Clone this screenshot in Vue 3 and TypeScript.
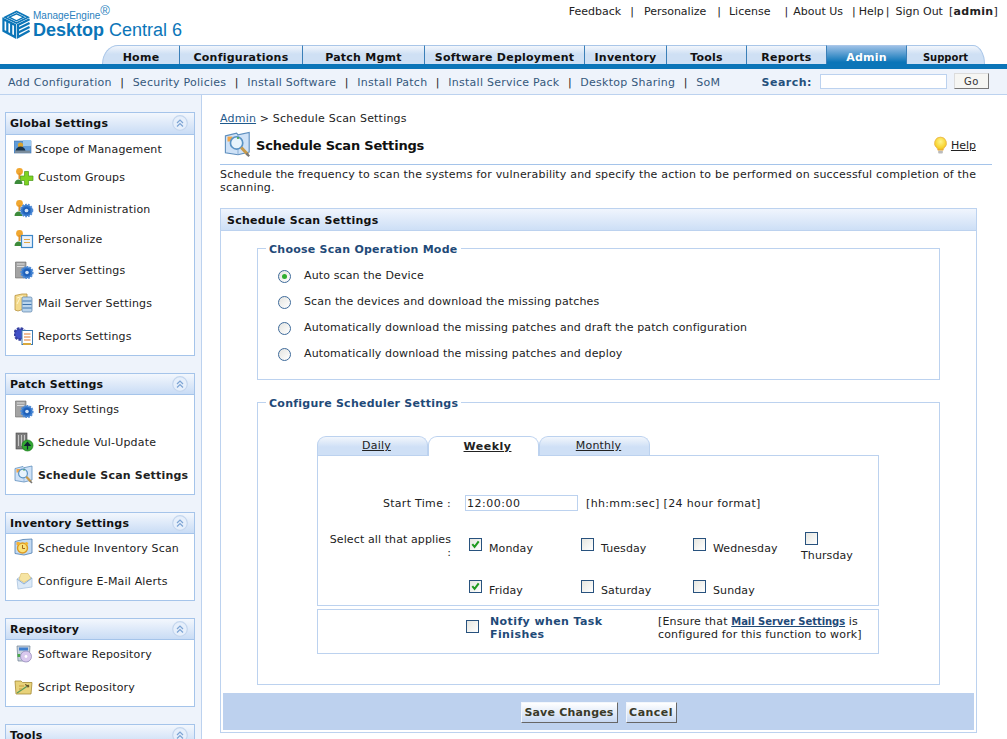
<template>
  <div class="page">
    <header class="top">
      <a class="logo">
        <svg class="logo-mark" viewBox="0 0 30 31" fill="none" stroke="#0b75b8" stroke-width="2.300">
          <path d="M3 9 15 3l12 6-12 6z" stroke-width="1.700" />
          <path d="M7.500 9 15 5.400 22.500 9 15 12.700z" stroke-width="1.500" />
          <path d="M1.500 11v12l12 6.500V17zM5.500 13.500V25M9.500 15.500V27" />
          <path d="M28.500 11 16.500 17v12.500l12-6.500M28.500 15l-12 6M28.500 19l-12 6" />
        </svg>
        <span class="logo-text">
          <span class="brand">ManageEngine<sup>®</sup></span>
          <span class="product"><b>Desktop</b> Central 6</span>
        </span>
      </a>
      <nav class="toplinks">
        <a>Feedback</a><i class="s1">|</i>
        <a>Personalize</a><i class="s2">|</i>
        <a>License</a><i class="s3">|</i>
        <a>About Us</a><i class="s4">|</i>
        <a>Help</a><i class="s5">|</i>
        <a>Sign Out</a>
        <span class="who">[<b>admin</b>]</span>
      </nav>
    </header>

    <div class="tabs-row">
      <div class="tabs">
        <a v-for="t in mainTabs" :key="t" :class="['tab', { on: t === 'Admin', small: t === 'Support' }]">{{ t }}</a>
      </div>
    </div>

    <div class="subnav">
      <nav class="sublinks">
        <template v-for="(l, i) in subLinks" :key="l">
          <i v-if="i">|</i><a>{{ l }}</a>
        </template>
      </nav>
      <label class="search-label">Search:</label>
      <input class="search-input" type="text" />
      <button class="go">Go</button>
    </div>

    <div class="layout">
      <aside class="side">
        <section v-for="p in panels" :key="p.title" class="panel">
          <h3 class="panel-head">
            {{ p.title }}
            <span class="collapse">
              <svg viewBox="0 0 16 16" fill="none" stroke="#7da4d4" stroke-width="1.200">
                <circle cx="8" cy="8" r="7.300" fill="#e6effb" stroke="#c4d6ee" />
                <path d="M5 8l3-3 3 3M5 11.500l3-3 3 3" />
              </svg>
            </span>
          </h3>
          <ul class="panel-body" :style="{ height: p.bodyH + 'px' }">
            <li
              v-for="it in p.items"
              :key="it.label"
              :class="{ current: it.current, tight: it.tight }"
              :style="{ marginTop: it.mt + 'px' }"
            >
              <svg class="ico" viewBox="0 0 20 20" v-html="icons[it.icon]"></svg>
              <span>{{ it.label }}</span>
            </li>
          </ul>
        </section>
      </aside>

      <main class="content">
        <div class="crumb"><a>Admin</a> &gt; Schedule Scan Settings</div>
        <div class="title-row">
          <svg class="title-ico" viewBox="0 0 20 20" v-html="icons.scan"></svg>
          <h1>Schedule Scan Settings</h1>
          <a class="help">
            <svg viewBox="0 0 16 20">
              <defs>
                <radialGradient id="bulb" cx="0.500" cy="0.350" r="0.700">
                  <stop offset="0" stop-color="#fff58a" />
                  <stop offset="0.700" stop-color="#f7d22c" />
                  <stop offset="1" stop-color="#e59a1c" />
                </radialGradient>
              </defs>
              <path d="M8 1a6.500 6.500 0 0 0-4 11.500c.8.800 1.200 1.500 1.200 2.500h5.600c0-1 .4-1.700 1.200-2.500A6.500 6.500 0 0 0 8 1z" fill="url(#bulb)" stroke="#e8b04a" stroke-width=".8" />
              <rect x="5.500" y="15.500" width="5" height="3" rx="1" fill="#bbb" />
            </svg>
            <span>Help</span>
          </a>
        </div>
        <p class="desc">Schedule the frequency to scan the systems for vulnerability and specify the action to be performed on successful completion of the scanning.</p>

        <section class="card">
          <h2 class="card-head">Schedule Scan Settings</h2>

          <fieldset class="group g-mode">
            <legend>Choose Scan Operation Mode</legend>
            <label v-for="(m, i) in modes" :key="m" class="radio-row">
              <span :class="['radio', { on: i === 0 }]"></span>{{ m }}
            </label>
          </fieldset>

          <fieldset class="group g-sched">
            <legend>Configure Scheduler Settings</legend>
            <div class="sched-inner">
              <div class="subtabs">
                <a class="subtab">Daily</a>
                <a class="subtab on">Weekly</a>
                <a class="subtab">Monthly</a>
              </div>
              <div class="weekly">
                <div class="lbl time-lbl">Start Time :</div>
                <div class="time-val">
                  <input class="time-input" type="text" value="12:00:00" />
                  <span>[hh:mm:sec] [24 hour format]</span>
                </div>
                <div class="lbl sel-lbl">Select all that applies<br />:</div>
                <div class="days">
                  <div v-for="d in days" :key="d.name" :class="['day', { stack: d.name === 'Thursday' }]">
                    <span class="check">
                      <svg v-if="d.on" viewBox="0 0 12 12" fill="none" stroke="#1f9a1f" stroke-width="2.200">
                        <path d="M2.500 5.500 5 8.500l4.500-6" />
                      </svg>
                    </span>
                    <span class="day-name">{{ d.name }}</span>
                  </div>
                </div>
              </div>
              <div class="notify">
                <span class="check notify-check"></span>
                <strong>Notify when Task Finishes</strong>
                <div class="ensure">[Ensure that <a>Mail Server Settings</a> is configured for this function to work]</div>
              </div>
            </div>
          </fieldset>

          <div class="actions">
            <button class="btn save">Save Changes</button>
            <button class="btn cancel">Cancel</button>
          </div>
        </section>
      </main>
    </div>
  </div>
</template>

<script setup lang="ts">
interface Item {
  label: string;
  icon: string;
  mt: number;
  current?: boolean;
  tight?: boolean;
}

const gear = (x: number, y: number, r: number) =>
  `<circle cx="${x}" cy="${y}" r="${r}" fill="#2f73c9" stroke="#4f8bd6" stroke-width="2" stroke-dasharray="1.800 1"/><circle cx="${x}" cy="${y}" r="${r * 0.62}" fill="#1f5fb8"/><circle cx="${x}" cy="${y}" r="${r * 0.32}" fill="#cfe3f8"/>`;
const person =
  '<circle cx="5.500" cy="4.500" r="3.400" fill="#f1a72f"/><rect x="4.500" y="6" width="2" height="6" fill="#e0922a"/><path d="M.5 17c0-3 2-4.500 4-4.500s4 1.500 4 4.500z" fill="#3d8b3a"/>';
const server =
  '<path d="M1.500 2h10.500v16H1.500z" fill="#a3a3a3" stroke="#6a6a6a" stroke-width=".6"/><path d="M3 4h7.500M3 6.500h7.500" stroke="#dcdcdc"/>';

const icons: Record<string, string> = {
  scope:
    '<rect x="0" y="2" width="17" height="12" fill="#5f9bd8" stroke="#3c6fa8" stroke-width=".6"/><rect x="9" y="1" width="8" height="6" fill="#9cc9ef"/><circle cx="6.500" cy="6" r="2.600" fill="#d8a32e"/><path d="M1.500 12c.5-3 2.500-4.500 5-4.500s4.500 1.500 5 4.500z" fill="#17324a"/><rect x="1" y="11.500" width="15" height="2.500" fill="#7a8c9c"/>',
  groups:
    person +
    '<path d="M10.500 4.500h4v4.500h4.500v4.500h-4.500v4.500h-4v-4.500H6.500V9h4z" fill="#7ed321" stroke="#4c9a1a" stroke-width=".7"/>',
  users: person + gear(12.500, 11.500, 5.800),
  personalize:
    person +
    '<rect x="7.500" y="6.500" width="11" height="12" fill="#eaf2fb" stroke="#3d87c8" stroke-width="1.200"/><path d="M10 10.500h6M10 13.500h6" stroke="#e0a84a"/>',
  server: server + gear(13, 12.500, 5.600),
  mail:
    '<path d="M1 2.500 8 1h5v14l-9 3-3-1z" fill="#f4da8c" stroke="#b8923c" stroke-width=".8"/><path d="M3 5l6-2M3 11l3-6" stroke="#fff6cf"/><rect x="8" y="4" width="10" height="15" rx="1.500" fill="#b9d4ec" stroke="#5a7fa8" stroke-width=".7"/><path d="M8.500 8h9M8.500 11.500h9M8.500 15h9" stroke="#3f74ac"/>',
  reports:
    '<circle cx="6" cy="8" r="5.500" fill="#4050c8" stroke="#3640a0" stroke-width="2.500" stroke-dasharray="2.500 1.200"/><rect x="8" y="4.500" width="10.500" height="14" fill="#fff" stroke="#3d7ab0" stroke-width="1"/><path d="M10 8h6.500M10 11h6.500M10 14h6.500" stroke="#e07a2c"/><rect x="9" y="17" width="8" height="2" fill="#d8a83c"/>',
  vul:
    '<rect x="2" y="1" width="11" height="16" fill="#7d7d7d" stroke="#444" stroke-width=".6"/><path d="M4.500 3v11M7.500 3v11M10.500 3v11" stroke="#c8c8c8"/><circle cx="13.500" cy="13.500" r="5.500" fill="#32a832" stroke="#1a7a1a" stroke-width=".7"/><path d="M13.500 17.500v-5M11 13.500l2.500-3 2.500 3z" stroke="#123" stroke-width="1.200" fill="#123"/>',
  scan:
    '<path d="M1 3.500 9 1.500l1 1.200L18 1v14l-8 2-9-1.500z" fill="#cfe2f7" stroke="#5f8fbe" stroke-width=".8"/><path d="M10 2.800V17" stroke="#7ea6cf" stroke-width=".6"/><rect x="2.500" y="4" width="3.500" height="3.500" fill="#f2a64a"/><circle cx="9" cy="8.500" r="4.400" fill="#e8f4fc" stroke="#5a93c4" stroke-width="1.200"/><circle cx="10" cy="5" r=".8" fill="#4aa84a"/><path d="m12.300 11.800 4.700 5" stroke="#c89a4a" stroke-width="2.200"/><path d="m16 16 2 2" stroke="#777" stroke-width="1.600"/>',
  inventory:
    '<path d="M1 3.500 9 1.500 18 1v14l-8 2-9-1.500z" fill="#c3daf2" stroke="#4d7cae" stroke-width=".8"/><rect x="2.500" y="4" width="3" height="3" fill="#f2a64a"/><circle cx="8.500" cy="10" r="5" fill="#fbe27a" stroke="#dd9a22" stroke-width="1.400"/><path d="M8.500 7v3.500h2.500" stroke="#a5681c" fill="none"/><circle cx="4.500" cy="5.500" r="1.600" fill="#f3b52e"/><circle cx="12.500" cy="5.500" r="1.600" fill="#f3b52e"/>',
  email:
    '<path d="M3 8 10 3l8 4v9l-14 2z" fill="#dbe9f7" stroke="#a9c3de" stroke-width=".8"/><path d="M7 2.500h7l3 5-7 4-5-3z" fill="#f6e4a2" stroke="#d8b860" stroke-width=".6"/><path d="M3 8l7 5 8-6" stroke="#8fb1d6" fill="none"/>',
  software:
    '<path d="M3 2h13l-1 15H4z" fill="#c8d3de" stroke="#6d7f92" stroke-width=".7"/><rect x="5" y="3.500" width="9" height="3" fill="#3f7fcf"/><rect x="3.500" y="10" width="3" height="3" fill="#4aa84a"/><circle cx="12" cy="12.500" r="5.500" fill="#d9c8ee" stroke="#8f86b8" stroke-width=".7"/><circle cx="12" cy="12.500" r="1.400" fill="#fff"/>',
  script:
    '<path d="M1 4h6l1.500 1.500H18L17 17H2z" fill="#e8d27a" stroke="#a58a35" stroke-width=".8"/><path d="M3 16 15 8" stroke="#5d9a5a" stroke-width="1.300"/><path d="M11 7.500l4 1.500-1 1.500" fill="#7c5a2c" stroke="#5b4020" stroke-width=".8"/><path d="M5 9h5M5 12h3" stroke="#c49a3a"/>',
};

const mainTabs = ["Home", "Configurations", "Patch Mgmt", "Software Deployment", "Inventory", "Tools", "Reports", "Admin", "Support"];
const subLinks = ["Add Configuration", "Security Policies", "Install Software", "Install Patch", "Install Service Pack", "Desktop Sharing", "SoM"];

const panels: { title: string; bodyH: number; items: Item[] }[] = [
  {
    title: "Global Settings",
    bodyH: 220,
    items: [
      { label: "Scope of Management", icon: "scope", mt: 4, tight: true },
      { label: "Custom Groups", icon: "groups", mt: 8 },
      { label: "User Administration", icon: "users", mt: 12 },
      { label: "Personalize", icon: "personalize", mt: 10 },
      { label: "Server Settings", icon: "server", mt: 11 },
      { label: "Mail Server Settings", icon: "mail", mt: 13 },
      { label: "Reports Settings", icon: "reports", mt: 13 },
    ],
  },
  {
    title: "Patch Settings",
    bodyH: 99,
    items: [
      { label: "Proxy Settings", icon: "server", mt: 4 },
      { label: "Schedule Vul-Update", icon: "vul", mt: 13 },
      { label: "Schedule Scan Settings", icon: "scan", mt: 13, current: true },
    ],
  },
  {
    title: "Inventory Settings",
    bodyH: 66,
    items: [
      { label: "Schedule Inventory Scan", icon: "inventory", mt: 4 },
      { label: "Configure E-Mail Alerts", icon: "email", mt: 13 },
    ],
  },
  {
    title: "Repository",
    bodyH: 66,
    items: [
      { label: "Software Repository", icon: "software", mt: 4 },
      { label: "Script Repository", icon: "script", mt: 13 },
    ],
  },
  { title: "Tools", bodyH: 40, items: [] },
];

const modes = [
  "Auto scan the Device",
  "Scan the devices and download the missing patches",
  "Automatically download the missing patches and draft the patch configuration",
  "Automatically download the missing patches and deploy",
];

const days = [
  { name: "Monday", on: true },
  { name: "Tuesday", on: false },
  { name: "Wednesday", on: false },
  { name: "Thursday", on: false },
  { name: "Friday", on: true },
  { name: "Saturday", on: false },
  { name: "Sunday", on: false },
];
</script>

<style>
html,
body {
  margin: 0;
  overflow: hidden;
  background: #fff;
}
</style>

<style scoped>
.page {
  width: 1007px;
  height: 739px;
  overflow: hidden;
  font: 11px/13px "DejaVu Sans", Verdana, sans-serif;
  color: #222;
  background: #fff;
}

/* header */
.top {
  display: flex;
  justify-content: space-between;
  height: 45px;
}
.logo {
  display: flex;
  gap: 2px;
  padding: 8px 0 0 2px;
  color: #0b75b8;
  font-family: "Liberation Sans", Arial, sans-serif;
}
.logo-mark {
  width: 29px;
  height: 31px;
}
.logo-text {
  display: flex;
  flex-direction: column;
}
.brand {
  font-size: 10px;
  line-height: 11px;
  margin-top: 2px;
  color: #2a7fbe;
}
.brand sup {
  font-size: 13px;
  line-height: 0;
  vertical-align: 4px;
}
.product {
  font-size: 18px;
  line-height: 18px;
}
.toplinks {
  display: flex;
  padding: 5px 9px 0 0;
  height: 13px;
}
.toplinks i {
  font-style: normal;
}
.s1 {
  margin: 0 10px 0 9px;
}
.s2 {
  margin: 0 8px 0 11px;
}
.s3 {
  margin: 0 5px 0 14px;
}
.s4 {
  margin: 0 3px 0 9px;
}
.s5 {
  margin: 0 6px 0 2px;
}
.who {
  margin-left: 6px;
  letter-spacing: 0.3px;
}

/* main tabs */
.tabs-row {
  border-bottom: 5px solid #0b75b8;
  height: 19px;
  padding-left: 102px;
}
.tabs {
  display: grid;
  grid-template-columns: 78px 123px 122px 160px 82px 80px 80px 80px 78px;
  height: 19px;
}
.tab {
  border-top: 1px solid #a9c6e8;
  border-right: 1px solid #3a7fb8;
  background: linear-gradient(#f2f6fc, #cfe0f4 45%);
  font-weight: bold;
  letter-spacing: 0.25px;
  color: #111;
  text-align: center;
  line-height: 23px;
  white-space: nowrap;
  overflow: hidden;
}
.tab:first-child {
  border-top-left-radius: 16px 19px;
  border-left: 1px solid #a9c6e8;
}
.tab:last-child {
  border-top-right-radius: 12px 19px;
  border-right: 1px solid #a9c6e8;
}
.tab.small {
  font-size: 10px;
  letter-spacing: 0;
}
.tab.on {
  background: linear-gradient(#9cc0e6, #0b75b8 90%);
  color: #fff;
}

/* sub navigation */
.subnav {
  display: flex;
  align-items: center;
  padding: 0 18px 1px 8px;
  background: #eef3fb;
  border-bottom: 1px solid #bcd2ef;
  box-sizing: border-box;
  height: 26px;
}
.sublinks {
  display: flex;
  flex: 1;
  margin-top: 3px;
  color: #35587c;
  letter-spacing: 0.25px;
}
.sublinks i {
  font-style: normal;
  color: #222;
  margin: 0 8.500px;
}
.search-label {
  font-weight: bold;
  letter-spacing: 0.5px;
  color: #25507c;
  margin: 3px 8px 0 0;
}
.search-input {
  width: 127px;
  height: 15px;
  padding: 0;
  box-sizing: border-box;
  border: 1px solid #bcd2ef;
  background: #fff;
  margin-right: 7px;
}
.go {
  width: 35px;
  height: 16px;
  padding: 0;
  font: 10px "DejaVu Sans", Verdana, sans-serif;
  letter-spacing: 0.5px;
  color: #333;
  background: #f6f6f3;
  border: 1px solid;
  border-color: #dcdcdc #777 #777 #dcdcdc;
}

/* layout */
.layout {
  display: flex;
  height: 644px;
}
.side {
  flex: none;
  box-sizing: content-box;
  padding: 17px 6px 0 5px;
  width: 190px;
  background: #eef3fb;
  border-right: 1px solid #bcd2ef;
  overflow: hidden;
}
.panel {
  border: 1px solid #a5c4ea;
  background: #fff;
  margin-bottom: 17px;
}
.panel-head {
  position: relative;
  margin: 0;
  height: 20px;
  border-bottom: 1px solid #a5c4ea;
  padding-left: 4px;
  font-size: 11px;
  line-height: 22px;
  font-weight: bold;
  letter-spacing: 0.2px;
  color: #111;
  background: linear-gradient(#f3f7fd, #c9dcf5);
}
.panel:first-child .panel-head {
  height: 21px;
}
.collapse {
  position: absolute;
  right: 6px;
  top: 2px;
  width: 16px;
  height: 16px;
}
.collapse svg {
  display: block;
}
.panel-body {
  list-style: none;
  margin: 0;
  padding: 0 0 0 8px;
  overflow: hidden;
}
.panel-body li {
  display: flex;
  align-items: center;
  height: 20px;
  gap: 4px;
  white-space: nowrap;
  letter-spacing: 0.18px;
}
.panel-body li.tight {
  gap: 1px;
}
.panel-body li.current {
  font-weight: bold;
  letter-spacing: 0.2px;
}
.ico {
  width: 20px;
  height: 20px;
  flex: none;
}

/* content */
.content {
  flex: 1;
  min-width: 0;
  padding: 17px 15px 0 18px;
}
.crumb {
  line-height: 13px;
  letter-spacing: 0.2px;
}
.crumb a {
  color: #1f5a8c;
  text-decoration: underline;
}
.title-row {
  display: flex;
  align-items: center;
  height: 38px;
  margin-top: 1px;
  border-bottom: 1px solid #a5c4ea;
  padding-left: 4px;
}
.title-ico {
  width: 28px;
  height: 28px;
  margin-right: 4px;
}
h1 {
  flex: 1;
  margin: 0;
  font-size: 13px;
  font-weight: bold;
  letter-spacing: -0.2px;
  color: #111;
}
.help {
  display: flex;
  align-items: center;
  gap: 3px;
  margin-right: 16px;
  text-decoration: underline;
}
.help svg {
  width: 15px;
  height: 19px;
}
.desc {
  margin: 3px 0 0;
  width: 772px;
  line-height: 13px;
  letter-spacing: 0.185px;
}
.card {
  margin-top: 14px;
  width: 755px;
  height: 523px;
  border: 1px solid #bcd2ef;
  box-sizing: content-box;
  display: flex;
  flex-direction: column;
  overflow: hidden;
}
.card-head {
  margin: 0;
  flex: none;
  height: 22px;
  box-sizing: border-box;
  border-bottom: 1px solid #bcd2ef;
  padding-left: 6px;
  font-size: 11px;
  line-height: 23px;
  letter-spacing: 0.25px;
  color: #111;
  background: linear-gradient(#f0f5fd, #cddff6);
}
.group {
  margin: 0 0 0 36px;
  padding: 0;
  width: 683px;
  flex: none;
  box-sizing: border-box;
  border: 1px solid #bcd2ef;
  min-width: 0;
}
.group legend {
  margin-left: 8px;
  padding: 0 3px;
  font-weight: bold;
  letter-spacing: 0.25px;
  color: #1f4a78;
  line-height: 13px;
  position: relative;
  top: 1px;
}
.g-mode {
  margin-top: 11px;
  height: 138px;
  padding-top: 7px;
}
.g-sched {
  margin-top: 16px;
  height: 289px;
  padding-top: 27px;
}
.sched-inner {
  margin-left: 59px;
}
.radio-row {
  display: flex;
  align-items: center;
  height: 26px;
  padding-left: 20px;
  letter-spacing: 0.13px;
}
.radio {
  box-sizing: border-box;
  width: 13px;
  height: 13px;
  margin: 2px 13px 0 0;
  border-radius: 50%;
  border: 1px solid #3e6a9a;
  background: linear-gradient(135deg, #e4e4e0, #fff);
  position: relative;
}
.radio.on::after {
  content: "";
  position: absolute;
  left: 3px;
  top: 3px;
  width: 5px;
  height: 5px;
  border-radius: 50%;
  background: #2fae2f;
}

/* weekly tabs */
.subtabs {
  display: flex;
  height: 19px;
}
.subtab {
  width: 111px;
  box-sizing: border-box;
  border: 1px solid #bcd2ef;
  border-bottom: none;
  border-radius: 9px 9px 0 0;
  background: linear-gradient(#f2f6fc, #cfe0f6 55%);
  padding-left: 8px;
  text-align: center;
  text-decoration: underline;
  letter-spacing: 0.2px;
  line-height: 17px;
}
.subtab.on {
  background: #fff;
  font-weight: bold;
  letter-spacing: 0.5px;
  line-height: 20px;
  position: relative;
  height: 20px;
}
.weekly {
  width: 562px;
  height: 151px;
  box-sizing: border-box;
  border: 1px solid #bcd2ef;
  display: grid;
  grid-template-columns: 133px 1fr;
  grid-template-rows: 62px 1fr;
}
.lbl {
  text-align: right;
  letter-spacing: 0.3px;
}
.time-lbl {
  padding-top: 41px;
}
.time-val {
  padding: 39px 0 0 14px;
  display: flex;
  align-items: flex-start;
  gap: 8px;
  letter-spacing: 0.35px;
}
.time-val span {
  padding-top: 2px;
}
.time-input {
  box-sizing: border-box;
  width: 113px;
  height: 16px;
  padding: 0 0 0 1px;
  border: 1px solid #bcd2ef;
  font: 11px "DejaVu Sans", Verdana, sans-serif;
  letter-spacing: 0.5px;
  color: #222;
}
.sel-lbl {
  padding-top: 15px;
  white-space: nowrap;
  letter-spacing: 0.1px;
}
.days {
  display: grid;
  grid-template-columns: repeat(4, 112px);
  grid-auto-rows: 42px;
  padding: 20px 0 0 18px;
}
.day {
  display: flex;
  gap: 7px;
  align-items: flex-start;
}
.day-name {
  padding-top: 4px;
  letter-spacing: 0.1px;
}
.day.stack {
  flex-direction: column;
  gap: 0;
  margin-top: -6px;
}
.day.stack .day-name {
  padding-top: 4px;
  margin-left: -4px;
}
.check {
  box-sizing: border-box;
  display: block;
  width: 13px;
  height: 13px;
  border: 1px solid #28527e;
  background: linear-gradient(135deg, #e6e6e0, #fff);
  flex: none;
}
.check svg {
  display: block;
  width: 11px;
  height: 11px;
}
.notify {
  width: 562px;
  height: 45px;
  margin-top: 3px;
  box-sizing: border-box;
  border: 1px solid #bcd2ef;
  display: grid;
  grid-template-columns: 24px 168px 1fr;
  padding: 5px 0 0 148px;
  line-height: 13px;
}
.notify-check {
  margin-top: 5px;
}
.notify strong {
  color: #1f4a78;
  letter-spacing: 0.4px;
}
.ensure {
  letter-spacing: 0.15px;
}
.ensure a {
  font-size: 10px;
  font-weight: bold;
  letter-spacing: -0.05px;
  color: #1f4a78;
  text-decoration: underline;
}
.actions {
  margin: 8px 2px 0;
  height: 37px;
  padding-top: 2px;
  box-sizing: border-box;
  background: #bdd1ee;
  display: flex;
  justify-content: center;
  align-items: center;
  gap: 8px;
  flex: none;
}
.btn {
  height: 21px;
  padding: 0;
  font: bold 11px "DejaVu Sans", Verdana, sans-serif;
  letter-spacing: 0.2px;
  color: #3a3a28;
  background: linear-gradient(#fff, #c7d8f2);
  border: 1px solid;
  border-color: #f2f6fc #666 #666 #f2f6fc;
}
.save {
  width: 97px;
}
.cancel {
  width: 51px;
  letter-spacing: 0.45px;
}
</style>
